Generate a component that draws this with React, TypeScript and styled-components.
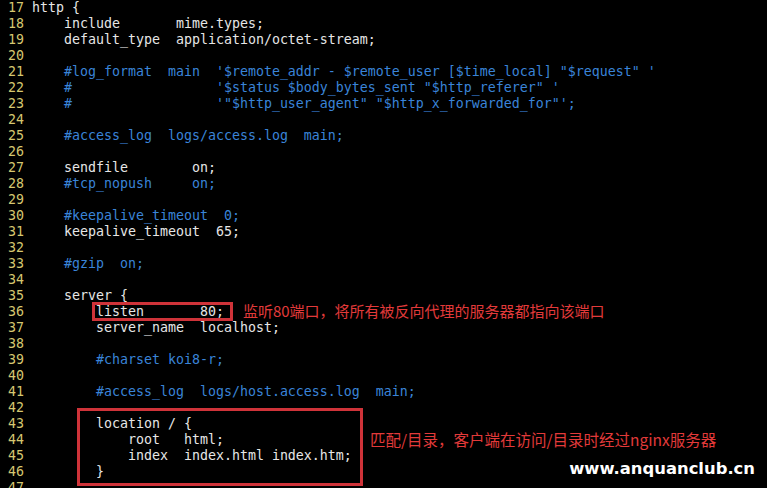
import React from 'react';
import styled, { createGlobalStyle } from 'styled-components';

const Global = createGlobalStyle`
  html, body { margin: 0; padding: 0; background: #000; }
  body { width: 767px; height: 488px; overflow: hidden; }
`;

const Screen = styled.div`
  position: relative;
  width: 767px;
  height: 488px;
  overflow: hidden;
  background: #000;
  font-family: "DejaVu Sans Mono", monospace;
  font-size: 13.29px;
  line-height: 16px;
`;

const Row = styled.div`
  display: flex;
  height: 16px;
  white-space: pre;
`;

const Num = styled.span`
  flex: 0 0 32px;
  box-sizing: border-box;
  padding-right: 8px;
  text-align: right;
  color: #d6c770;
`;

const Code = styled.span<{ $comment?: boolean }>`
  color: ${(p) => (p.$comment ? '#3a84d8' : '#e6e6e6')};
`;

const Boxed = styled.span`
  position: relative;
  &::after {
    content: '';
    position: absolute;
    left: -4px;
    right: -9px;
    top: -2px;
    bottom: -2px;
    border: 3px solid #cf3339;
  }
`;

const Note = styled.span<{ $gap: number; $size: number }>`
  margin-left: ${(p) => p.$gap}px;
  font-family: "Noto Sans CJK SC", sans-serif;
  font-size: ${(p) => p.$size}px;
  color: #e23a3a;
  position: relative;
  top: -1px;
`;

const Group = styled.div`
  position: relative;
  &::after {
    content: '';
    position: absolute;
    left: 77px;
    top: -8px;
    width: 286px;
    height: 78px;
    box-sizing: border-box;
    border: 3px solid #cf3339;
  }
`;

const Watermark = styled.div`
  position: absolute;
  right: 12px;
  top: 461px;
  font-family: "DejaVu Sans", sans-serif;
  font-weight: bold;
  font-size: 16.4px;
  line-height: 1;
  color: #fff;
`;

type L = { n: number; t: string; c?: boolean };

const before: L[] = [
  { n: 17, t: 'http {' },
  { n: 18, t: '    include       mime.types;' },
  { n: 19, t: '    default_type  application/octet-stream;' },
  { n: 20, t: '' },
  { n: 21, t: `    #log_format  main  '$remote_addr - $remote_user [$time_local] "$request" '`, c: true },
  { n: 22, t: `    #                  '$status $body_bytes_sent "$http_referer" '`, c: true },
  { n: 23, t: `    #                  '"$http_user_agent" "$http_x_forwarded_for"';`, c: true },
  { n: 24, t: '' },
  { n: 25, t: '    #access_log  logs/access.log  main;', c: true },
  { n: 26, t: '' },
  { n: 27, t: '    sendfile        on;' },
  { n: 28, t: '    #tcp_nopush     on;', c: true },
  { n: 29, t: '' },
  { n: 30, t: '    #keepalive_timeout  0;', c: true },
  { n: 31, t: '    keepalive_timeout  65;' },
  { n: 32, t: '' },
  { n: 33, t: '    #gzip  on;', c: true },
  { n: 34, t: '' },
  { n: 35, t: '    server {' },
];

const middle: L[] = [
  { n: 37, t: '        server_name  localhost;' },
  { n: 38, t: '' },
  { n: 39, t: '        #charset koi8-r;', c: true },
  { n: 40, t: '' },
  { n: 41, t: '        #access_log  logs/host.access.log  main;', c: true },
  { n: 42, t: '' },
];

const Line: React.FC<{ l: L }> = ({ l }) => (
  <Row>
    <Num>{l.n}</Num>
    <Code $comment={l.c}>{l.t}</Code>
  </Row>
);

export default function App() {
  return (
    <Screen>
      <Global />
      {before.map((l) => (
        <Line key={l.n} l={l} />
      ))}
      <Row>
        <Num>36</Num>
        <Code>
          {'        '}
          <Boxed>{'listen       80;'}</Boxed>
        </Code>
        <Note $gap={19} $size={15}>监听80端口，将所有被反向代理的服务器都指向该端口</Note>
      </Row>
      {middle.map((l) => (
        <Line key={l.n} l={l} />
      ))}
      <Group>
        <Line l={{ n: 43, t: '        location / {' }} />
        <Row>
          <Num>44</Num>
          <Code>{'            root   html;'}</Code>
          <Note $gap={146} $size={15.5}>匹配/目录，客户端在访问/目录时经过nginx服务器</Note>
        </Row>
        <Line l={{ n: 45, t: '            index  index.html index.htm;' }} />
        <Line l={{ n: 46, t: '        }' }} />
      </Group>
      <Line l={{ n: 47, t: '' }} />
      <Watermark>www.anquanclub.cn</Watermark>
    </Screen>
  );
}
